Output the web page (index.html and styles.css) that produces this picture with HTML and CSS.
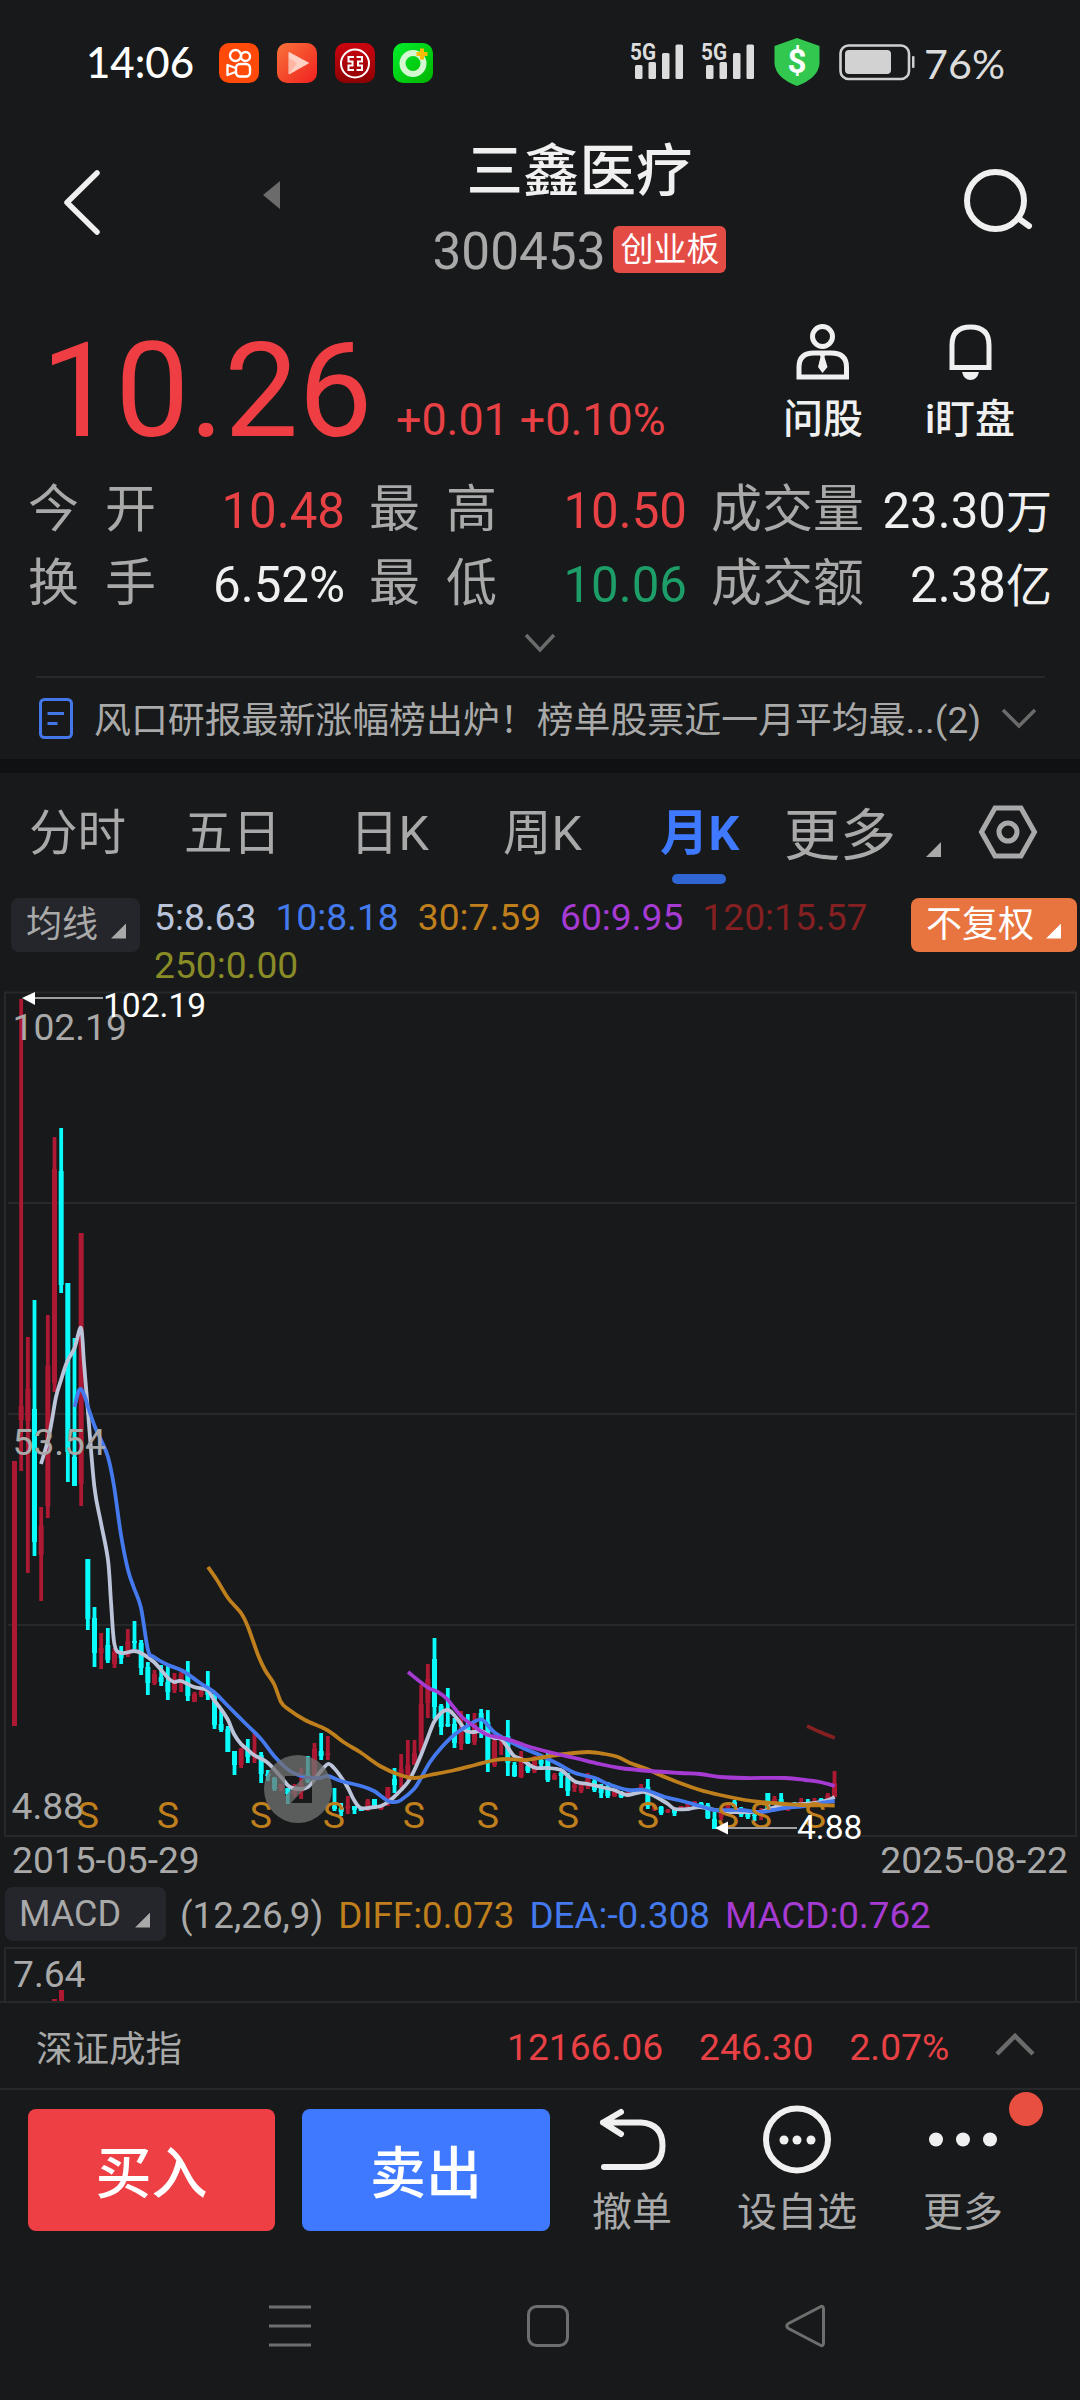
FILE: index.html
```html
<!DOCTYPE html>
<html lang="zh-CN">
<head>
  <meta charset="UTF-8">
  <meta name="viewport" content="width=device-width, initial-scale=1.0">
  <title>三鑫医疗 300453</title>
  <link rel="stylesheet" href="styles.css">
</head>
<body>
  <div class="screen">
    <div class="status-bar">
      <span class="time">14:06</span>
      <div class="apps">
        <svg width="40" height="40" viewBox="0 0 40 40">
          <rect width="40" height="40" rx="10" fill="#ff4a0a"/>
          <g fill="none" stroke="#fff" stroke-width="2.4">
            <circle cx="16.5" cy="12.5" r="5.5"/>
            <circle cx="26.5" cy="13.5" r="4.5"/>
            <rect x="17" y="21" width="14" height="12.5" rx="4"/>
            <path d="M16.5 25L8.5 22V32L16.5 29" stroke-linejoin="round"/>
          </g>
        </svg>
        <svg width="40" height="40" viewBox="0 0 40 40">
          <defs>
            <linearGradient id="play" x1="0" y1="0" x2="1" y2="1">
              <stop offset="0" stop-color="#f8743a"/>
              <stop offset="1" stop-color="#f01f1f"/>
            </linearGradient>
          </defs>
          <rect width="40" height="40" rx="10" fill="url(#play)"/>
          <path d="M12 9.5L31.5 20L12 31Z" fill="#ffd0c4" stroke="#ffd0c4" stroke-linejoin="round"/>
          <path d="M12 15L20 20L12 31Z" fill="#ffb5a2"/>
        </svg>
        <svg width="40" height="40" viewBox="0 0 40 40">
          <defs>
            <linearGradient id="bank" x1="0" y1="0" x2="0" y2="1">
              <stop offset="0" stop-color="#cc0510"/>
              <stop offset="1" stop-color="#8e0003"/>
            </linearGradient>
          </defs>
          <rect width="40" height="40" rx="10" fill="url(#bank)"/>
          <g fill="none" stroke="#fff" stroke-width="2">
            <circle cx="20" cy="20.5" r="14"/>
            <path d="M19 14H13.5V18.5H17.5V22.5H13.5V27H19M21.5 14H27V18.5H23V22.5H27V27H21.5"/>
          </g>
        </svg>
        <svg width="40" height="40" viewBox="0 0 40 40">
          <defs>
            <linearGradient id="ring" x1="0" y1="0" x2="1" y2="1">
              <stop offset="0" stop-color="#00f02c"/>
              <stop offset="1" stop-color="#00b400"/>
            </linearGradient>
          </defs>
          <rect width="40" height="40" rx="10" fill="url(#ring)"/>
          <circle cx="20" cy="20.5" r="10.5" fill="none" stroke="#d4f8d2" stroke-width="6"/>
          <path d="M29 5.5V16.5M23.5 11H34.5" stroke="#fcbc05" stroke-width="4"/>
        </svg>
      </div>
      <svg class="signals" width="390" height="50" viewBox="626 36 390 50">
        <g fill="#dcdcdc">
          <text class="net" x="630" y="60" textLength="26" lengthAdjust="spacingAndGlyphs">5G</text>
          <rect x="635" y="65" width="7.5" height="14" rx="1.5"/>
          <rect x="648.5" y="62" width="7.5" height="17" rx="1.5"/>
          <rect x="662" y="53" width="7.5" height="26" rx="1.5"/>
          <rect x="675.5" y="44.5" width="7.5" height="34.5" rx="1.5"/>
          <text class="net" x="701" y="60" textLength="26" lengthAdjust="spacingAndGlyphs">5G</text>
          <rect x="706" y="65" width="7.5" height="14" rx="1.5"/>
          <rect x="719.5" y="62" width="7.5" height="17" rx="1.5"/>
          <rect x="733" y="53" width="7.5" height="26" rx="1.5"/>
          <rect x="746.5" y="44.5" width="7.5" height="34.5" rx="1.5"/>
        </g>
        <path d="M797 38L819.5 46V64Q818 78 797 86Q776 78 774.5 64V46Z" fill="#32c850"/>
        <text class="dollar" x="797" y="73" text-anchor="middle">$</text>
        <rect x="840.5" y="45.5" width="68.5" height="33.5" rx="8" fill="none" stroke="#cfcfcf" stroke-width="2.6"/>
        <rect x="845" y="50" width="46" height="24" rx="4" fill="#d2d2d2"/>
        <rect x="912" y="56" width="2.5" height="12" rx="1" fill="#cfcfcf"/>
        <text class="percent" x="924" y="79" textLength="81" lengthAdjust="spacingAndGlyphs">76%</text>
      </svg>
    </div>

    <header class="title-bar">
      <svg class="back" width="40" height="70" viewBox="0 0 40 70">
        <path d="M36 6L6 35.5L36 65"/>
      </svg>
      <svg class="prev" width="18" height="28" viewBox="0 0 18 28">
        <path d="M17 0V28L0 14Z"/>
      </svg>
      <div class="stock">
        <h1>三鑫医疗</h1>
        <div class="stock-code">
          <span>300453</span>
          <em>创业板</em>
        </div>
      </div>
      <svg class="search" width="72" height="72" viewBox="960 165 72 72">
        <circle cx="995.5" cy="200.5" r="28.5"/>
        <path d="M1018 218L1029 226"/>
      </svg>
    </header>

    <section class="quote">
      <span class="price">10.26</span>
      <span class="change">+0.01 +0.10%</span>
      <div class="tool ask">
        <svg width="56" height="58" viewBox="795 322 56 58">
          <circle cx="822.5" cy="335.5" r="10"/>
          <path d="M799 376V366Q799 352 814 352H831Q846.5 352 846.5 366V376Z"/>
          <path class="solid" d="M819 351H826L824.5 356L827.5 366L822.5 372L818 366L820.5 356Z"/>
        </svg>
        问股
      </div>
      <div class="tool alert">
        <svg width="56" height="58" viewBox="941 322 56 58">
          <path d="M951 366.5V344Q951 326 969.5 326T988 344V366.5Z"/>
          <path class="solid" d="M961 371H978Q976 379 969.5 379T961 371Z"/>
        </svg>
        i盯盘
      </div>
    </section>

    <section class="stats">
      <span class="key spread"><i>今</i><i>开</i></span><span class="val red">10.48</span>
      <span class="key mid spread"><i>最</i><i>高</i></span><span class="val red">10.50</span>
      <span class="key last">成交量</span><span class="val">23.30<i>万</i></span>
      <span class="key spread"><i>换</i><i>手</i></span><span class="val">6.52%</span>
      <span class="key mid spread"><i>最</i><i>低</i></span><span class="val green">10.06</span>
      <span class="key last">成交额</span><span class="val">2.38<i>亿</i></span>
    </section>
    <div class="expand">
      <svg width="32" height="20" viewBox="0 0 32 20"><path class="chevron" d="M2 2L16 17L30 2"/></svg>
    </div>

    <section class="news">
      <svg class="news-icon" width="34" height="42" viewBox="0 0 34 42">
        <rect x="1.5" y="1.5" width="31" height="38" rx="4"/>
        <path d="M8.5 15.5H25M8.5 25.5H18.5"/>
      </svg>
      <span class="news-text">风口研报最新涨幅榜出炉！榜单股票近一月平均最...(2)</span>
      <svg width="36" height="22" viewBox="0 0 36 22"><path class="chevron" d="M2 2L18 18L34 2"/></svg>
    </section>
    <div class="band"></div>

    <nav class="tabs">
      <span>分时</span>
      <span>五日</span>
      <span>日K</span>
      <span>周K</span>
      <span class="active">月K</span>
      <span class="more">更多</span>
      <i class="corner"></i>
      <svg width="58" height="54" viewBox="0 0 58 54">
        <path d="M16 3H42L55.5 27L42 51H16L2.5 27Z"/>
        <circle cx="29" cy="27" r="9"/>
      </svg>
    </nav>

    <section class="averages">
      <span class="chip">均线<i class="corner"></i></span>
      <div class="ma-list">
        <span class="ma5">5:8.63</span>
        <span class="ma10">10:8.18</span>
        <span class="ma30">30:7.59</span>
        <span class="ma60">60:9.95</span>
        <span class="ma120">120:15.57</span>
        <span class="ma250">250:0.00</span>
      </div>
      <span class="chip orange">不复权<i class="corner"></i></span>
    </section>

    <svg class="chart" width="1080" height="860" viewBox="0 985 1080 860">
      <g class="grid">
        <rect x="5" y="992.5" width="1071" height="843.5"/>
        <path d="M8 1203H1075M8 1414H1075M8 1625H1075"/>
      </g>
      <g id="candles"></g>
      <g id="lines"></g>
      <g id="marks"></g>
      <path class="zoom-btn" fill-rule="evenodd" d="M264 1789a34 34 0 1 0 68 0a34 34 0 1 0 -68 0ZM285 1776H305L285 1796ZM312 1781V1803H291Z"/>
      <g class="scale">
        <text x="12.5" y="1040">102.19</text>
        <text x="12.5" y="1455">53.54</text>
        <text x="11.5" y="1819">4.88</text>
      </g>
      <g class="peak">
        <path d="M34 998H103M728 1828H797"/>
        <polygon points="22,998 35,992 35,1005"/>
        <polygon points="715,1828 728,1821.5 728,1834.5"/>
        <text x="103" y="1017">102.19</text>
        <text x="797" y="1839">4.88</text>
      </g>
    </svg>

    <div class="dates"><span>2015-05-29</span><span>2025-08-22</span></div>

    <section class="macd">
      <span class="chip">MACD<i class="corner"></i></span>
      <span class="params">(12,26,9)</span>
      <span class="diff">DIFF:0.073</span>
      <span class="dea">DEA:-0.308</span>
      <span class="macd-val">MACD:0.762</span>
    </section>
    <div class="macd-chart">
      <span>7.64</span>
      <svg width="16" height="11" viewBox="0 0 16 11">
        <rect x="0" y="9" width="5" height="2"/>
        <rect x="7" y="0" width="5" height="11"/>
      </svg>
    </div>

    <section class="index-row">
      <span class="index-name">深证成指</span>
      <span>12166.06</span>
      <span>246.30</span>
      <span>2.07%</span>
      <svg width="40" height="24" viewBox="0 0 40 24"><path class="chevron" d="M2 21L20 3L38 21"/></svg>
    </section>

    <footer class="actions">
      <button class="buy">买入</button>
      <button class="sell">卖出</button>
      <div class="action undo">
        <svg width="70" height="68" viewBox="598 2105 70 68">
          <path d="M622 2112L604 2122.5L622 2134M604 2122.5H642Q663.5 2124 663.5 2145.5T642 2167H605"/>
        </svg>
        撤单
      </div>
      <div class="action watch">
        <svg width="70" height="68" viewBox="762 2105 70 68">
          <circle cx="797" cy="2139.5" r="31"/>
          <g class="solid">
            <circle cx="784" cy="2140" r="4.5"/>
            <circle cx="797" cy="2140" r="4.5"/>
            <circle cx="811" cy="2140" r="4.5"/>
          </g>
        </svg>
        设自选
      </div>
      <div class="action others">
        <svg width="70" height="68" viewBox="927.5 2105 70 68">
          <g class="solid">
            <circle cx="935.5" cy="2139.5" r="7"/>
            <circle cx="962.5" cy="2139.5" r="7"/>
            <circle cx="989.5" cy="2139.5" r="7"/>
          </g>
        </svg>
        更多
        <b class="dot"></b>
      </div>
    </footer>

    <div class="system-nav">
      <svg width="42" height="42" viewBox="0 0 42 42"><path d="M0 2H42M0 21H42M0 40H42"/></svg>
      <svg width="42" height="42" viewBox="0 0 42 42"><rect x="1.5" y="1.5" width="39" height="39" rx="8"/></svg>
      <svg width="42" height="42" viewBox="0 0 42 42"><path d="M38.5 4Q38.5 0 35 2L3.5 18.5Q0 21 3.5 23.5L35 40Q38.5 42 38.5 38Z"/></svg>
    </div>
  </div>
  <script src="chart.js"></script>
</body>
</html>
```
FILE: styles.css
```css
:root {
  --bg: #17191a;
  --line: #26282a;
  --gray: #a9a9a9;
  --white: #f0f0f0;
  --red: #e84145;
  --blue: #3e79ff;
}

* {
  box-sizing: border-box;
}

body {
  margin: 0;
  background: var(--bg);
}

i,
em {
  font-style: normal;
}

svg {
  display: block;
  flex-shrink: 0;
  overflow: visible;
}

.screen {
  width: 1080px;
  height: 2400px;
  overflow: hidden;
  background: var(--bg);
  color: var(--gray);
  font-family: Roboto, "Noto Sans CJK SC", sans-serif;
  font-size: 37.2px;
  white-space: nowrap;
}

.chevron {
  fill: none;
  stroke: #6b6b6b;
  stroke-width: 3.5;
}

.corner {
  display: block;
  width: 15px;
  height: 15px;
  background: currentColor;
  clip-path: polygon(100% 0, 100% 100%, 0 100%);
}

/* status bar */
.status-bar {
  display: flex;
  height: 124px;
  padding: 36px 0 0 86px;
}

.time {
  width: 133px;
  color: #fff;
  font: 500 42px/52px Lato, sans-serif;
}

.apps {
  display: flex;
  gap: 18px;
  padding-top: 7px;
}

.signals {
  margin-left: 193px;
}

.net {
  font: 700 24px Roboto, sans-serif;
}

.dollar {
  font: 700 33px Roboto, sans-serif;
  fill: #fff;
}

.percent {
  font: 41px Lato, sans-serif;
  fill: #dcdcdc;
}

/* title */
.title-bar {
  display: flex;
  height: 166px;
}

.back {
  margin: 43px 0 0 61px;
  fill: none;
  stroke: var(--white);
  stroke-width: 5.5;
  stroke-linecap: round;
  stroke-linejoin: round;
}

.prev {
  margin: 57px 0 0 162px;
  fill: #6b6b6b;
}

.stock {
  width: 597px;
  text-align: center;
}

.stock h1 {
  margin: 11px 0 0;
  color: var(--white);
  font-size: 56.5px;
  font-weight: 500;
  line-height: 74px;
}

.stock-code {
  display: flex;
  justify-content: center;
  align-items: center;
  gap: 8px;
  padding-top: 15px;
  font-size: 51.3px;
  line-height: 56px;
}

.stock-code em {
  width: 113px;
  height: 47px;
  margin-top: -5px;
  border-radius: 6px;
  background: #e34c45;
  color: #fff;
  font-size: 33px;
  line-height: 47px;
}

.search {
  margin: 41px 0 0 82px;
  fill: none;
  stroke: var(--white);
  stroke-width: 6;
  stroke-linecap: round;
}

/* price */
.quote {
  display: flex;
  align-items: flex-start;
  height: 182px;
  padding-left: 41px;
  color: var(--red);
}

.price {
  width: 355px;
  padding-top: 35px;
  color: #ee3e43;
  font-size: 132px;
  line-height: 132px;
}

.change {
  width: 374px;
  padding-top: 103px;
  font-size: 44.8px;
  line-height: 54px;
}

.tool {
  display: flex;
  flex-direction: column;
  align-items: center;
  width: 106px;
  padding-top: 33px;
  color: var(--white);
  font-size: 40px;
  font-weight: 500;
  line-height: 78px;
}

.tool svg,
.action svg {
  fill: none;
  stroke: var(--white);
  stroke-width: 5;
}

.tool .solid,
.action .solid {
  fill: var(--white);
  stroke: none;
}

.alert {
  margin-left: 41px;
}

/* figures */
.stats {
  display: grid;
  grid-template-columns: 126px 191px 183px 159px 181px 184px;
  grid-template-rows: 74px 74px;
  height: 148px;
  padding-left: 28px;
  font-size: 51px;
  line-height: 75px;
}

.spread {
  display: flex;
  gap: 26px;
}

.mid {
  padding-left: 24px;
}

.last {
  padding-left: 24px;
}

.val {
  padding-top: 2px;
  color: var(--white);
  font-size: 49.2px;
  text-align: right;
}

.val i {
  font-size: 46px;
}

.red {
  color: var(--red);
}

.green {
  color: #1d9e68;
}

.expand {
  display: flex;
  justify-content: center;
  height: 56px;
  padding-top: 13px;
}

/* news line */
.news {
  display: flex;
  align-items: center;
  height: 83px;
  margin: 0 35px 0 36px;
  border-top: 2px solid var(--line);
}

.news-icon {
  margin-left: 3px;
  fill: none;
  stroke: #4377ea;
  stroke-width: 3;
}

.news-text {
  flex: none;
  width: 928px;
  padding: 0 0 3px 21px;
  font-size: 36.9px;
}

.band {
  height: 14px;
  background: #101113;
}

/* period tabs */
.tabs {
  display: grid;
  grid-template-columns: 155px 166px 153px 157px 124px 142px 53px auto;
  height: 123px;
  padding: 20px 0 0 29px;
  font-size: 48.5px;
  line-height: 82px;
}

.tabs .active {
  position: relative;
  color: var(--blue);
  font-weight: 700;
}

.tabs .active::after {
  content: "";
  position: absolute;
  left: 12px;
  top: 81px;
  width: 54px;
  height: 10px;
  border-radius: 5px;
  background: #2f66d4;
}

.tabs .more {
  font-size: 56px;
  line-height: 86px;
}

.tabs .corner {
  margin-top: 49px;
}

.tabs svg {
  margin-top: 12px;
  fill: none;
  stroke: var(--gray);
  stroke-width: 5;
}

/* moving averages */
.chip {
  display: flex;
  align-items: center;
  gap: 13px;
  height: 54px;
  padding-left: 15px;
  border-radius: 8px;
  background: #25262b;
  font-size: 36px;
}

.chip .corner {
  margin-top: 12px;
}

.averages {
  display: flex;
  align-items: flex-start;
  height: 89px;
  padding: 2px 0 0 11px;
  line-height: 52px;
}

.averages .chip {
  width: 129px;
}

.averages .orange {
  width: 166px;
  gap: 12px;
  background: #e8743f;
  color: #fff;
}

.ma-list {
  display: flex;
  flex-wrap: wrap;
  column-gap: 19px;
  width: 771px;
  margin-top: -5px;
  padding-left: 14px;
  line-height: 48px;
}

.ma5 {
  color: #b9c3da;
}

.ma10,
.dea {
  color: #447aee;
}

.ma30,
.diff {
  color: #bf7f1d;
}

.ma60,
.macd-val {
  color: #a63bd3;
}

.ma120 {
  color: #842022;
}

.ma250 {
  color: #898b27;
}

/* chart */
.grid {
  fill: none;
  stroke: var(--line);
  stroke-width: 2;
}

.up {
  fill: #ad1833;
}

.down {
  fill: #09fbfb;
}

.ma-line {
  fill: none;
  stroke-width: 3.8;
}

.s-mark {
  fill: #bf7f1d;
  font-size: 37.5px;
  text-anchor: middle;
}

.zoom-btn {
  fill: #737373;
  fill-opacity: 0.75;
}

.scale {
  fill: var(--gray);
}

.peak {
  fill: #fff;
  font-size: 33.6px;
}

.peak path {
  stroke: #a0a0a0;
  stroke-width: 2;
}

.dates {
  display: flex;
  justify-content: space-between;
  height: 42px;
  padding: 0 12px;
  line-height: 31px;
}

.macd {
  display: flex;
  height: 60px;
  padding-left: 5px;
  font-size: 36.8px;
  line-height: 58px;
}

.macd .chip {
  width: 161px;
  margin-right: 14px;
  padding-left: 14px;
  gap: 14px;
  line-height: 56px;
}

.params,
.diff,
.dea {
  margin-right: 15px;
}

.macd-chart {
  display: flex;
  flex-direction: column;
  justify-content: flex-end;
  height: 54px;
  margin: 0 3px 0 4px;
  padding-left: 7px;
  border: 2px solid var(--line);
  border-bottom: 0;
}

.macd-chart span {
  height: 34px;
  line-height: 37px;
}

.macd-chart svg {
  margin: 0 0 0 39px;
  fill: #ad1833;
}

/* index quote */
.index-row {
  display: flex;
  align-items: center;
  height: 87px;
  padding: 2px 45px 0 36px;
  border-top: 2px solid var(--line);
  color: var(--red);
}

.index-row span {
  margin-right: 36px;
}

.index-row .index-name {
  width: 435px;
  padding-bottom: 1px;
  color: var(--gray);
  font-size: 36.5px;
}

.index-row svg {
  margin: 0 0 3px auto;
}

.index-row .chevron {
  stroke-width: 4.5;
}

/* trade buttons */
.actions {
  display: flex;
  height: 181px;
  padding: 19px 0 0 28px;
  border-top: 2px solid var(--line);
}

.actions button {
  width: 247px;
  height: 122px;
  margin: 0 27px 0 0;
  padding: 0 0 3px;
  border: 0;
  border-radius: 8px;
  background: #ed3f44;
  color: #fff;
  font: 500 56px "Noto Sans CJK SC", sans-serif;
}

.actions .sell {
  width: 248px;
  margin-right: 17px;
  background: var(--blue);
}

.action {
  position: relative;
  display: flex;
  flex-direction: column;
  align-items: center;
  width: 130px;
  margin-top: -4px;
  font-size: 40px;
  line-height: 80px;
}

.action svg {
  stroke-width: 6;
  stroke-linecap: round;
  stroke-linejoin: round;
}

.watch {
  margin-left: 35px;
}

.others {
  margin-left: 36px;
}

.dot {
  position: absolute;
  left: 111px;
  top: -13px;
  width: 34px;
  height: 34px;
  border-radius: 50%;
  background: #e94f40;
}

.system-nav {
  display: flex;
  gap: 216px;
  padding: 36px 0 0 269px;
}

.system-nav svg {
  fill: none;
  stroke: #6e6e6e;
  stroke-width: 3;
}
```
FILE: chart.js
```js
const NS = 'http://www.w3.org/2000/svg';
const STEP = 20 / 3;
const FIRST = 14.5;

// u = up, d = down, then high, body top, body bottom, low
const candles = `
u 1461 1461 1726 1726|u 999 1406 1420 1471|u 1337 1389 1421 1573|d 1300 1409 1542 1556|u 1507 1526 1555 1601
u 1315 1366 1506 1518|u 1137 1169 1383 1392|d 1128 1171 1285 1293|d 1283 1283 1452 1482|d 1338 1457 1486 1486
u 1233 1233 1484 1506|d 1559 1559 1619 1630|d 1607 1618 1653 1667|u 1633 1648 1653 1669|d 1628 1645 1660 1663
u 1648 1652 1664 1668|d 1646 1651 1658 1664|u 1629 1641 1655 1657|d 1621 1641 1643 1649|d 1640 1643 1668 1675
d 1662 1667 1683 1695|u 1670 1674 1683 1685|d 1665 1677 1682 1686|d 1666 1682 1692 1700|u 1673 1682 1690 1693
u 1672 1674 1683 1692|d 1661 1674 1696 1701|u 1692 1694 1702 1702|u 1688 1691 1695 1697|d 1671 1687 1695 1700
d 1694 1694 1725 1729|d 1709 1724 1730 1732|d 1726 1729 1752 1752|d 1751 1751 1765 1775|u 1748 1749 1765 1768
d 1739 1750 1757 1763|u 1732 1755 1757 1763|d 1752 1755 1774 1783|d 1770 1774 1776 1781|d 1777 1778 1789 1791
u 1784 1784 1789 1791|d 1788 1788 1794 1804|u 1784 1786 1794 1797|u 1768 1784 1792 1799|d 1756 1774 1782 1783
u 1743 1749 1775 1780|d 1733 1751 1756 1760|u 1736 1753 1755 1760|d 1788 1806 1809 1811|d 1803 1808 1812 1816
u 1796 1806 1808 1814|d 1806 1806 1810 1814|d 1808 1808 1811 1811|u 1799 1801 1809 1811|d 1799 1799 1808 1809
u 1806 1806 1809 1810|u 1787 1787 1803 1806|d 1768 1779 1785 1793|u 1754 1769 1778 1788|u 1740 1765 1776 1780
u 1740 1753 1765 1765|u 1685 1704 1751 1753|u 1664 1679 1703 1718|d 1638 1659 1707 1719|d 1704 1706 1727 1735
d 1688 1724 1726 1727|d 1718 1724 1743 1748|u 1711 1727 1744 1750|d 1714 1727 1743 1744|u 1713 1724 1742 1745
d 1709 1713 1720 1738|d 1710 1722 1762 1772|u 1738 1741 1765 1767|u 1738 1738 1741 1755|d 1720 1736 1763 1776
d 1762 1765 1776 1777|u 1751 1757 1777 1778|d 1762 1766 1771 1773|u 1756 1761 1771 1773|d 1757 1760 1764 1769
d 1752 1760 1780 1782|u 1773 1775 1779 1780|d 1772 1773 1776 1788|d 1773 1777 1791 1796|u 1783 1785 1788 1792
u 1783 1785 1791 1793|u 1773 1778 1787 1789|d 1778 1781 1790 1792|d 1784 1787 1793 1798|d 1782 1788 1796 1798
u 1790 1791 1796 1797|d 1791 1794 1797 1798|u 1791 1793 1795 1797|d 1790 1790 1793 1793|u 1784 1787 1790 1792
d 1779 1787 1806 1809|u 1805 1806 1809 1811|d 1806 1807 1813 1815|u 1809 1810 1812 1813|d 1809 1810 1813 1816
u 1806 1806 1809 1809|u 1803 1804 1808 1811|u 1801 1802 1805 1805|d 1802 1803 1806 1806|d 1803 1805 1818 1819
d 1812 1819 1829 1829|u 1809 1811 1817 1820|u 1803 1805 1808 1810|d 1800 1802 1807 1807|d 1807 1810 1815 1817
d 1813 1814 1817 1819|d 1812 1815 1816 1821|u 1808 1810 1816 1820|d 1793 1793 1808 1808|u 1796 1799 1802 1803
d 1793 1799 1803 1803|u 1807 1808 1810 1811|d 1802 1803 1806 1807|u 1798 1802 1805 1806|d 1799 1803 1806 1807
u 1798 1801 1803 1803|d 1798 1799 1801 1802|u 1793 1795 1799 1800|u 1771 1783 1797 1797`;

const lines = [
  ['#bcc4da', '41,1464 48,1440 52,1420 56,1397 61,1380 67,1362 74.6,1348 81,1328 84,1363 88,1412 94.4,1487 101,1523 108,1560 111,1602 114.4,1644 121,1653 134,1651 141,1653 154,1662 168,1678 174,1682 181,1681 194,1687 207,1690 214,1700 221,1709 228,1720 234,1734 241,1744 248,1750 254,1755 268,1763 281,1777 290,1787 301,1789 308,1787 314,1780 321,1771 328,1764 334,1768 341,1777 348,1788 354,1800 361,1808 374,1807 381,1806 388,1802 394,1797 401,1790 408,1782 414,1771 421,1755 428,1737 434,1722 441,1713 448,1710 454,1715 461,1724 466,1731 474,1732 481,1731 487,1734 494,1738 501,1739 508,1748 514,1756 521,1759 528,1764 536,1768 548,1768 561,1770 568,1776 576,1782 588,1784 601,1787 614,1790 621,1793 628,1795 641,1792 648,1793 660,1799 668,1804 675,1809 688,1809 700,1807 715,1810 730,1812 745,1812 760,1812 775,1807 790,1805 805,1804 820,1802 828,1800 834.7,1797'],
  ['#447aee', '74.6,1407 78,1393 81,1389 85,1397 88,1407 95,1427 101,1440 108,1457 114,1486 121,1535 128,1570 134,1588 141,1608 148,1650 154,1657 168,1665 183,1671 200,1683 214,1692 228,1706 245,1723 261,1739 275,1757 290,1771 305,1777 320,1778 328,1776 341,1781 361,1786 374,1791 388,1801 395,1802 401,1800 414,1789 421,1778 430,1762 441,1748 454,1735 467,1726 478,1720 484,1721 494,1732 507,1740 525,1749 540,1755 560,1765 575,1773 595,1778 608,1784 628,1790 645,1790 665,1797 682,1801 700,1806 715,1810 740,1810 760,1812 773,1810 785,1808 805,1806 820,1803 834.7,1801'],
  ['#bf7f1d', '208,1567 217,1580 228,1598 241,1613 248,1627 258,1655 265,1670 274,1684 281,1702 288,1709 305,1720 327,1730 345,1743 360,1752 380,1766 400,1775 415,1778 430,1775 455,1770 475,1765 495,1760 507,1759 525,1760 545,1757 565,1754 588,1752 605,1754 618,1757 630,1763 647,1769 660,1775 680,1783 700,1790 720,1795 745,1800 760,1802 785,1804 800,1805 834.7,1805.5'],
  ['#a63bd3', '408,1672 427,1687 438,1692 447,1699 461,1716 475,1727 488,1735 507,1739 530,1747 553,1753 575,1758 600,1764 620,1768 650,1771 680,1773 700,1774 720,1777 745,1778 785,1778 805,1780 820,1782 834.7,1786'],
  ['#842022', '807,1726 820,1732 834.7,1738']
];

const marks = [88, 168, 261, 334, 414, 488, 568, 648, 728, 761, 815];

function add(parent, tag, attrs) {
  const el = document.createElementNS(NS, tag);
  for (const key in attrs) el.setAttribute(key, attrs[key]);
  document.getElementById(parent).appendChild(el);
  return el;
}

candles.trim().split(/[|\n]/).forEach((row, i) => {
  const [dir, high, top, bottom, low] = row.split(' ');
  const x = FIRST + i * STEP;
  const cls = dir === 'u' ? 'up' : 'down';
  add('candles', 'rect', { class: cls, x: x - 1.9, y: high, width: 3.8, height: low - high });
  add('candles', 'rect', { class: cls, x: x - 2.5, y: top, width: 5, height: bottom - top });
});

// smooth curve through every point
function curve(points) {
  const p = points.split(' ').map(s => s.split(',').map(Number));
  let d = 'M' + p[0];
  for (let i = 0; i < p.length - 1; i++) {
    const a = p[i - 1] || p[i];
    const b = p[i];
    const c = p[i + 1];
    const e = p[i + 2] || c;
    d += `C${b[0] + (c[0] - a[0]) / 6} ${b[1] + (c[1] - a[1]) / 6} ${c[0] - (e[0] - b[0]) / 6} ${c[1] - (e[1] - b[1]) / 6} ${c[0]} ${c[1]}`;
  }
  return d;
}

lines.forEach(([color, points]) => {
  add('lines', 'path', { class: 'ma-line', stroke: color, d: curve(points) });
});

marks.forEach(x => {
  add('marks', 'text', { class: 's-mark', x: x, y: 1828 }).textContent = 'S';
});
```
